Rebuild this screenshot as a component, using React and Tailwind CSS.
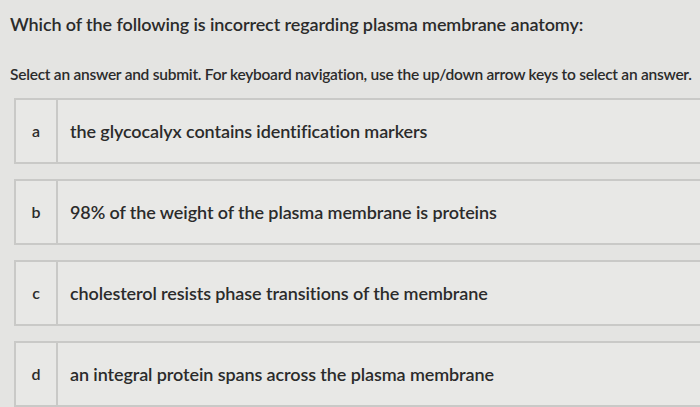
import React from 'react';

const options = [
  { key: 'a', text: 'the glycocalyx contains identification markers' },
  { key: 'b', text: '98% of the weight of the plasma membrane is proteins' },
  { key: 'c', text: 'cholesterol resists phase transitions of the membrane' },
  { key: 'd', text: 'an integral protein spans across the plasma membrane' },
];

export default function App() {
  return (
    <div className="w-[700px] h-[407px] overflow-hidden bg-[#e4e4e2] text-[#2b2b2b] font-['Lato',sans-serif]">
      <h1 className="pl-[10px] pt-[11px] text-[18px] leading-[26px] font-semibold tracking-[-0.1px]">
        Which of the following is incorrect regarding plasma membrane anatomy:
      </h1>
      <p className="pl-[10px] mt-[27px] text-[15.5px] leading-[20px] font-semibold tracking-[-0.25px]">
        Select an answer and submit. For keyboard navigation, use the up/down arrow keys to select an answer.
      </p>
      <div className="mt-[14px] ml-[14px] mr-[-20px] flex flex-col gap-[15px]">
        {options.map(o => (
          <div key={o.key} className="flex h-[66px] border-2 border-[#c9c9c7] bg-[#e8e8e6]">
            <div className="w-[42px] flex items-center justify-center border-r-2 border-[#c9c9c7] text-[16px] font-semibold">
              {o.key}
            </div>
            <div className="flex items-center pl-[12px] text-[18px] font-semibold tracking-[-0.1px]">
              {o.text}
            </div>
          </div>
        ))}
      </div>
    </div>
  );
}
